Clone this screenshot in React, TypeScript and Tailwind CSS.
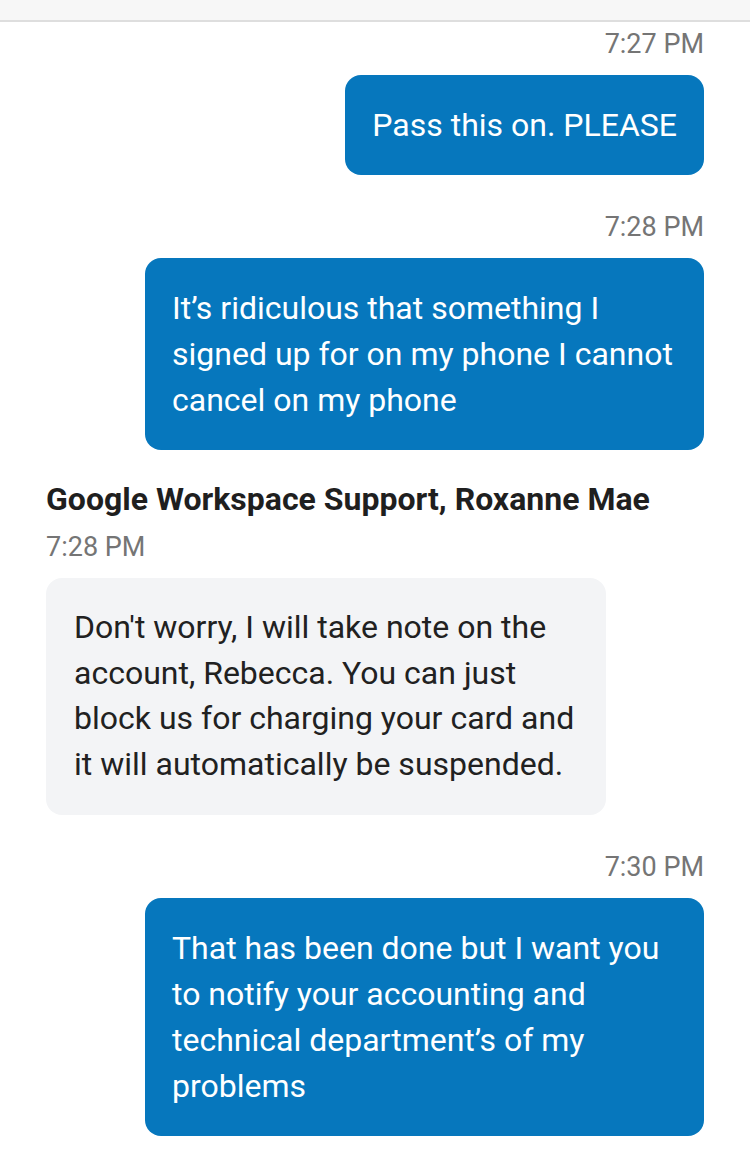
import React from "react"

type Msg =
  | { kind: "out"; time: string; text: string }
  | { kind: "in"; sender: string; time: string; text: string }

const messages: Msg[] = [
  { kind: "out", time: "7:27 PM", text: "Pass this on. PLEASE" },
  {
    kind: "out",
    time: "7:28 PM",
    text: "It’s ridiculous that something I signed up for on my phone I cannot cancel on my phone",
  },
  {
    kind: "in",
    sender: "Google Workspace Support, Roxanne Mae",
    time: "7:28 PM",
    text: "Don't worry, I will take note on the account, Rebecca. You can just block us for charging your card and it will automatically be suspended.",
  },
  {
    kind: "out",
    time: "7:30 PM",
    text: "That has been done but I want you to notify your accounting and technical department’s of my problems",
  },
]

const App: React.FC = () => {
  return (
    <div className="min-h-[1166px] w-[750px] bg-white font-['Roboto',sans-serif]">
      <div className="h-[22px] bg-[#f7f7f7] border-b-2 border-[#dedede]" />

      <div className="flex flex-col px-[46px] pt-[6px]">
        {messages.map((m, i) =>
          m.kind === "out" ? (
            <div key={i} className={"flex flex-col items-end " + (i > 0 ? "mt-[36px]" : "")}>
              <span className="text-[27px] leading-[32px] text-[#757575]">{m.time}</span>
              <div className="mt-[15px] max-w-[559px] rounded-[16px] bg-[#0677bd] px-[27px] py-[27px] text-[32px] leading-[46px] text-white">
                {m.text}
              </div>
            </div>
          ) : (
            <div key={i} className="mt-[30px] flex flex-col items-start">
              <span className="text-[32px] font-bold leading-[38px] text-[#1f1f1f]">{m.sender}</span>
              <span className="mt-[13px] text-[27px] leading-[32px] text-[#757575]">{m.time}</span>
              <div className="mt-[15px] w-[560px] rounded-[16px] bg-[#f3f4f6] px-[28px] py-[27px] text-[32px] leading-[45.7px] text-[#212121]">
                {m.text}
              </div>
            </div>
          )
        )}
      </div>
    </div>
  )
}

export default App
